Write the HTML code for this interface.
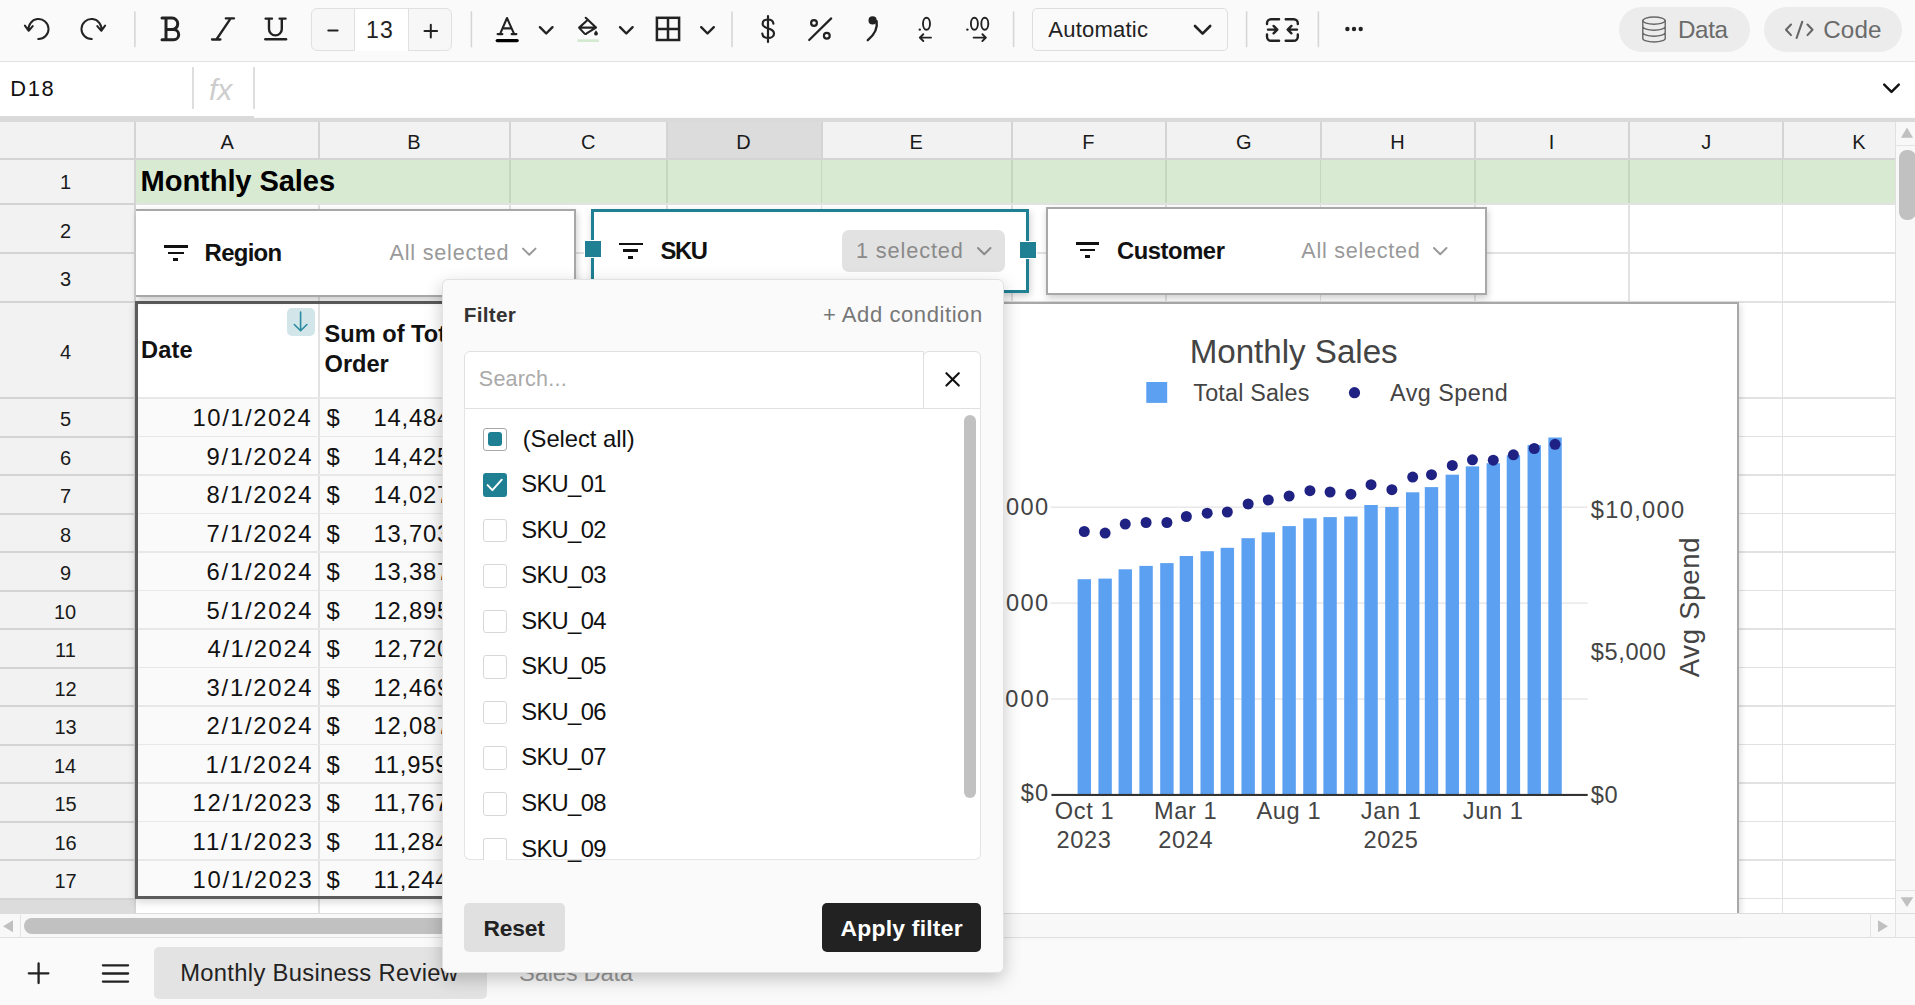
<!DOCTYPE html><html><head><meta charset="utf-8"><style>html,body{margin:0;padding:0;width:1915px;height:1005px;overflow:hidden;background:#fafafa}</style></head><body><div style="position:relative;width:1915px;height:1005px;overflow:hidden"><div style="position:absolute;left:0px;top:0px;width:1915px;height:1005px;background:#fafafa"></div><div style="position:absolute;left:0px;top:122px;width:1895px;height:791px;background:#fff"></div><div style="position:absolute;left:0px;top:122px;width:1895px;height:37.19999999999999px;background:#f2f2f2"></div><div style="position:absolute;left:666.9px;top:122px;width:154.60000000000002px;height:37.19999999999999px;background:#dcdcdc"></div><div style="position:absolute;left:0px;top:122px;width:135.1px;height:791px;background:#f2f2f2"></div><div style="position:absolute;left:0px;top:898.5px;width:135.1px;height:14.5px;background:#dcdcdc"></div><div style="position:absolute;left:135.1px;top:159.2px;width:1759.9px;height:44.80000000000001px;background:#d9ead3"></div><div style="position:absolute;left:317.8px;top:159.2px;width:1.8px;height:753.8px;background:#e2e2e2"></div><div style="position:absolute;left:509.0px;top:159.2px;width:1.8px;height:753.8px;background:#e2e2e2"></div><div style="position:absolute;left:666.0px;top:159.2px;width:1.8px;height:753.8px;background:#e2e2e2"></div><div style="position:absolute;left:820.6px;top:159.2px;width:1.8px;height:753.8px;background:#e2e2e2"></div><div style="position:absolute;left:1011.4px;top:159.2px;width:1.8px;height:753.8px;background:#e2e2e2"></div><div style="position:absolute;left:1165.3999999999999px;top:159.2px;width:1.8px;height:753.8px;background:#e2e2e2"></div><div style="position:absolute;left:1319.6999999999998px;top:159.2px;width:1.8px;height:753.8px;background:#e2e2e2"></div><div style="position:absolute;left:1473.8px;top:159.2px;width:1.8px;height:753.8px;background:#e2e2e2"></div><div style="position:absolute;left:1627.8999999999999px;top:159.2px;width:1.8px;height:753.8px;background:#e2e2e2"></div><div style="position:absolute;left:1781.6999999999998px;top:159.2px;width:1.8px;height:753.8px;background:#e2e2e2"></div><div style="position:absolute;left:317.8px;top:159.2px;width:1.8px;height:44.80000000000001px;background:#d9ead3"></div><div style="position:absolute;left:509.0px;top:159.2px;width:1.8px;height:44.80000000000001px;background:#c6d7c0"></div><div style="position:absolute;left:666.0px;top:159.2px;width:1.8px;height:44.80000000000001px;background:#c6d7c0"></div><div style="position:absolute;left:820.6px;top:159.2px;width:1.8px;height:44.80000000000001px;background:#c6d7c0"></div><div style="position:absolute;left:1011.4px;top:159.2px;width:1.8px;height:44.80000000000001px;background:#c6d7c0"></div><div style="position:absolute;left:1165.3999999999999px;top:159.2px;width:1.8px;height:44.80000000000001px;background:#c6d7c0"></div><div style="position:absolute;left:1319.6999999999998px;top:159.2px;width:1.8px;height:44.80000000000001px;background:#c6d7c0"></div><div style="position:absolute;left:1473.8px;top:159.2px;width:1.8px;height:44.80000000000001px;background:#c6d7c0"></div><div style="position:absolute;left:1627.8999999999999px;top:159.2px;width:1.8px;height:44.80000000000001px;background:#c6d7c0"></div><div style="position:absolute;left:1781.6999999999998px;top:159.2px;width:1.8px;height:44.80000000000001px;background:#c6d7c0"></div><div style="position:absolute;left:135.1px;top:203.1px;width:1759.9px;height:1.8px;background:#e2e2e2"></div><div style="position:absolute;left:135.1px;top:251.79999999999998px;width:1759.9px;height:1.8px;background:#e2e2e2"></div><div style="position:absolute;left:135.1px;top:300.8px;width:1759.9px;height:1.8px;background:#e2e2e2"></div><div style="position:absolute;left:135.1px;top:397.1px;width:1759.9px;height:1.8px;background:#e2e2e2"></div><div style="position:absolute;left:135.1px;top:435.6px;width:1759.9px;height:1.8px;background:#e2e2e2"></div><div style="position:absolute;left:135.1px;top:474.1px;width:1759.9px;height:1.8px;background:#e2e2e2"></div><div style="position:absolute;left:135.1px;top:512.6px;width:1759.9px;height:1.8px;background:#e2e2e2"></div><div style="position:absolute;left:135.1px;top:551.1px;width:1759.9px;height:1.8px;background:#e2e2e2"></div><div style="position:absolute;left:135.1px;top:589.6px;width:1759.9px;height:1.8px;background:#e2e2e2"></div><div style="position:absolute;left:135.1px;top:628.1px;width:1759.9px;height:1.8px;background:#e2e2e2"></div><div style="position:absolute;left:135.1px;top:666.6px;width:1759.9px;height:1.8px;background:#e2e2e2"></div><div style="position:absolute;left:135.1px;top:705.1px;width:1759.9px;height:1.8px;background:#e2e2e2"></div><div style="position:absolute;left:135.1px;top:743.6px;width:1759.9px;height:1.8px;background:#e2e2e2"></div><div style="position:absolute;left:135.1px;top:782.1px;width:1759.9px;height:1.8px;background:#e2e2e2"></div><div style="position:absolute;left:135.1px;top:820.6px;width:1759.9px;height:1.8px;background:#e2e2e2"></div><div style="position:absolute;left:135.1px;top:859.1px;width:1759.9px;height:1.8px;background:#e2e2e2"></div><div style="position:absolute;left:135.1px;top:897.6px;width:1759.9px;height:1.8px;background:#e2e2e2"></div><div style="position:absolute;left:134.1px;top:122px;width:2px;height:37.19999999999999px;background:#d4d4d4"></div><div style="position:absolute;left:317.7px;top:122px;width:2px;height:37.19999999999999px;background:#d4d4d4"></div><div style="position:absolute;left:508.9px;top:122px;width:2px;height:37.19999999999999px;background:#d4d4d4"></div><div style="position:absolute;left:665.9px;top:122px;width:2px;height:37.19999999999999px;background:#d4d4d4"></div><div style="position:absolute;left:820.5px;top:122px;width:2px;height:37.19999999999999px;background:#d4d4d4"></div><div style="position:absolute;left:1011.3px;top:122px;width:2px;height:37.19999999999999px;background:#d4d4d4"></div><div style="position:absolute;left:1165.3px;top:122px;width:2px;height:37.19999999999999px;background:#d4d4d4"></div><div style="position:absolute;left:1319.6px;top:122px;width:2px;height:37.19999999999999px;background:#d4d4d4"></div><div style="position:absolute;left:1473.7px;top:122px;width:2px;height:37.19999999999999px;background:#d4d4d4"></div><div style="position:absolute;left:1627.8px;top:122px;width:2px;height:37.19999999999999px;background:#d4d4d4"></div><div style="position:absolute;left:1781.6px;top:122px;width:2px;height:37.19999999999999px;background:#d4d4d4"></div><div style="position:absolute;left:0px;top:158.0px;width:1895px;height:2.4px;background:#d4d4d4"></div><div style="position:absolute;left:134.1px;top:122px;width:2px;height:791px;background:#d4d4d4"></div><div style="position:absolute;left:0px;top:203.0px;width:135.1px;height:2px;background:#d4d4d4"></div><div style="position:absolute;left:0px;top:251.7px;width:135.1px;height:2px;background:#d4d4d4"></div><div style="position:absolute;left:0px;top:300.7px;width:135.1px;height:2px;background:#d4d4d4"></div><div style="position:absolute;left:0px;top:397.0px;width:135.1px;height:2px;background:#d4d4d4"></div><div style="position:absolute;left:0px;top:435.5px;width:135.1px;height:2px;background:#d4d4d4"></div><div style="position:absolute;left:0px;top:474.0px;width:135.1px;height:2px;background:#d4d4d4"></div><div style="position:absolute;left:0px;top:512.5px;width:135.1px;height:2px;background:#d4d4d4"></div><div style="position:absolute;left:0px;top:551.0px;width:135.1px;height:2px;background:#d4d4d4"></div><div style="position:absolute;left:0px;top:589.5px;width:135.1px;height:2px;background:#d4d4d4"></div><div style="position:absolute;left:0px;top:628.0px;width:135.1px;height:2px;background:#d4d4d4"></div><div style="position:absolute;left:0px;top:666.5px;width:135.1px;height:2px;background:#d4d4d4"></div><div style="position:absolute;left:0px;top:705.0px;width:135.1px;height:2px;background:#d4d4d4"></div><div style="position:absolute;left:0px;top:743.5px;width:135.1px;height:2px;background:#d4d4d4"></div><div style="position:absolute;left:0px;top:782.0px;width:135.1px;height:2px;background:#d4d4d4"></div><div style="position:absolute;left:0px;top:820.5px;width:135.1px;height:2px;background:#d4d4d4"></div><div style="position:absolute;left:0px;top:859.0px;width:135.1px;height:2px;background:#d4d4d4"></div><div style="position:absolute;left:0px;top:897.5px;width:135.1px;height:2px;background:#d4d4d4"></div><div style="position:absolute;left:220.40px;top:132.34px;font-family:'Liberation Sans', sans-serif;font-size:20px;font-weight:400;font-style:normal;line-height:1;white-space:pre;color:#1a1a1a;letter-spacing:0.000px;">A</div><div style="position:absolute;left:407.30px;top:132.34px;font-family:'Liberation Sans', sans-serif;font-size:20px;font-weight:400;font-style:normal;line-height:1;white-space:pre;color:#1a1a1a;letter-spacing:0.000px;">B</div><div style="position:absolute;left:580.90px;top:132.34px;font-family:'Liberation Sans', sans-serif;font-size:20px;font-weight:400;font-style:normal;line-height:1;white-space:pre;color:#1a1a1a;letter-spacing:0.000px;">C</div><div style="position:absolute;left:736.20px;top:132.34px;font-family:'Liberation Sans', sans-serif;font-size:20px;font-weight:400;font-style:normal;line-height:1;white-space:pre;color:#1a1a1a;letter-spacing:0.000px;">D</div><div style="position:absolute;left:909.40px;top:132.34px;font-family:'Liberation Sans', sans-serif;font-size:20px;font-weight:400;font-style:normal;line-height:1;white-space:pre;color:#1a1a1a;letter-spacing:0.000px;">E</div><div style="position:absolute;left:1082.30px;top:132.34px;font-family:'Liberation Sans', sans-serif;font-size:20px;font-weight:400;font-style:normal;line-height:1;white-space:pre;color:#1a1a1a;letter-spacing:0.000px;">F</div><div style="position:absolute;left:1235.95px;top:132.34px;font-family:'Liberation Sans', sans-serif;font-size:20px;font-weight:400;font-style:normal;line-height:1;white-space:pre;color:#1a1a1a;letter-spacing:0.000px;">G</div><div style="position:absolute;left:1390.15px;top:132.34px;font-family:'Liberation Sans', sans-serif;font-size:20px;font-weight:400;font-style:normal;line-height:1;white-space:pre;color:#1a1a1a;letter-spacing:0.000px;">H</div><div style="position:absolute;left:1548.75px;top:132.34px;font-family:'Liberation Sans', sans-serif;font-size:20px;font-weight:400;font-style:normal;line-height:1;white-space:pre;color:#1a1a1a;letter-spacing:0.000px;">I</div><div style="position:absolute;left:1701.20px;top:132.34px;font-family:'Liberation Sans', sans-serif;font-size:20px;font-weight:400;font-style:normal;line-height:1;white-space:pre;color:#1a1a1a;letter-spacing:0.000px;">J</div><div style="position:absolute;left:1852.15px;top:132.34px;font-family:'Liberation Sans', sans-serif;font-size:20px;font-weight:400;font-style:normal;line-height:1;white-space:pre;color:#1a1a1a;letter-spacing:0.000px;">K</div><div style="position:absolute;left:60.00px;top:172.24px;font-family:'Liberation Sans', sans-serif;font-size:20px;font-weight:400;font-style:normal;line-height:1;white-space:pre;color:#1a1a1a;letter-spacing:0.000px;">1</div><div style="position:absolute;left:60.00px;top:220.59px;font-family:'Liberation Sans', sans-serif;font-size:20px;font-weight:400;font-style:normal;line-height:1;white-space:pre;color:#1a1a1a;letter-spacing:0.000px;">2</div><div style="position:absolute;left:60.00px;top:269.44px;font-family:'Liberation Sans', sans-serif;font-size:20px;font-weight:400;font-style:normal;line-height:1;white-space:pre;color:#1a1a1a;letter-spacing:0.000px;">3</div><div style="position:absolute;left:60.00px;top:342.09px;font-family:'Liberation Sans', sans-serif;font-size:20px;font-weight:400;font-style:normal;line-height:1;white-space:pre;color:#1a1a1a;letter-spacing:0.000px;">4</div><div style="position:absolute;left:60.00px;top:409.49px;font-family:'Liberation Sans', sans-serif;font-size:20px;font-weight:400;font-style:normal;line-height:1;white-space:pre;color:#1a1a1a;letter-spacing:0.000px;">5</div><div style="position:absolute;left:60.00px;top:447.99px;font-family:'Liberation Sans', sans-serif;font-size:20px;font-weight:400;font-style:normal;line-height:1;white-space:pre;color:#1a1a1a;letter-spacing:0.000px;">6</div><div style="position:absolute;left:60.00px;top:486.49px;font-family:'Liberation Sans', sans-serif;font-size:20px;font-weight:400;font-style:normal;line-height:1;white-space:pre;color:#1a1a1a;letter-spacing:0.000px;">7</div><div style="position:absolute;left:60.00px;top:524.99px;font-family:'Liberation Sans', sans-serif;font-size:20px;font-weight:400;font-style:normal;line-height:1;white-space:pre;color:#1a1a1a;letter-spacing:0.000px;">8</div><div style="position:absolute;left:60.00px;top:563.49px;font-family:'Liberation Sans', sans-serif;font-size:20px;font-weight:400;font-style:normal;line-height:1;white-space:pre;color:#1a1a1a;letter-spacing:0.000px;">9</div><div style="position:absolute;left:54.00px;top:601.99px;font-family:'Liberation Sans', sans-serif;font-size:20px;font-weight:400;font-style:normal;line-height:1;white-space:pre;color:#1a1a1a;letter-spacing:0.000px;">10</div><div style="position:absolute;left:55.00px;top:640.49px;font-family:'Liberation Sans', sans-serif;font-size:20px;font-weight:400;font-style:normal;line-height:1;white-space:pre;color:#1a1a1a;letter-spacing:0.000px;">11</div><div style="position:absolute;left:54.50px;top:678.99px;font-family:'Liberation Sans', sans-serif;font-size:20px;font-weight:400;font-style:normal;line-height:1;white-space:pre;color:#1a1a1a;letter-spacing:0.000px;">12</div><div style="position:absolute;left:54.50px;top:717.49px;font-family:'Liberation Sans', sans-serif;font-size:20px;font-weight:400;font-style:normal;line-height:1;white-space:pre;color:#1a1a1a;letter-spacing:0.000px;">13</div><div style="position:absolute;left:54.00px;top:755.99px;font-family:'Liberation Sans', sans-serif;font-size:20px;font-weight:400;font-style:normal;line-height:1;white-space:pre;color:#1a1a1a;letter-spacing:0.000px;">14</div><div style="position:absolute;left:54.50px;top:794.49px;font-family:'Liberation Sans', sans-serif;font-size:20px;font-weight:400;font-style:normal;line-height:1;white-space:pre;color:#1a1a1a;letter-spacing:0.000px;">15</div><div style="position:absolute;left:54.50px;top:832.99px;font-family:'Liberation Sans', sans-serif;font-size:20px;font-weight:400;font-style:normal;line-height:1;white-space:pre;color:#1a1a1a;letter-spacing:0.000px;">16</div><div style="position:absolute;left:54.50px;top:871.49px;font-family:'Liberation Sans', sans-serif;font-size:20px;font-weight:400;font-style:normal;line-height:1;white-space:pre;color:#1a1a1a;letter-spacing:0.000px;">17</div><div style="position:absolute;left:140.60px;top:166.60px;font-family:'Liberation Sans', sans-serif;font-size:29.13px;font-weight:700;font-style:normal;line-height:1;white-space:pre;color:#000;letter-spacing:-0.108px;">Monthly Sales</div><div style="position:absolute;left:135.0px;top:301.0px;width:385.0px;height:597.8px;background:#fafafa;box-shadow:0 3px 8px rgba(0,0,0,0.16)"></div><div style="position:absolute;left:135.0px;top:301.0px;width:385.0px;height:97.0px;background:#fff"></div><div style="position:absolute;left:317.7px;top:301.0px;width:2px;height:597.8px;background:#e2e2e2"></div><div style="position:absolute;left:135.0px;top:397.2px;width:385.0px;height:1.6px;background:#e8e8e8"></div><div style="position:absolute;left:135.0px;top:435.7px;width:385.0px;height:1.6px;background:#e8e8e8"></div><div style="position:absolute;left:135.0px;top:474.2px;width:385.0px;height:1.6px;background:#e8e8e8"></div><div style="position:absolute;left:135.0px;top:512.7px;width:385.0px;height:1.6px;background:#e8e8e8"></div><div style="position:absolute;left:135.0px;top:551.2px;width:385.0px;height:1.6px;background:#e8e8e8"></div><div style="position:absolute;left:135.0px;top:589.7px;width:385.0px;height:1.6px;background:#e8e8e8"></div><div style="position:absolute;left:135.0px;top:628.2px;width:385.0px;height:1.6px;background:#e8e8e8"></div><div style="position:absolute;left:135.0px;top:666.7px;width:385.0px;height:1.6px;background:#e8e8e8"></div><div style="position:absolute;left:135.0px;top:705.2px;width:385.0px;height:1.6px;background:#e8e8e8"></div><div style="position:absolute;left:135.0px;top:743.7px;width:385.0px;height:1.6px;background:#e8e8e8"></div><div style="position:absolute;left:135.0px;top:782.2px;width:385.0px;height:1.6px;background:#e8e8e8"></div><div style="position:absolute;left:135.0px;top:820.7px;width:385.0px;height:1.6px;background:#e8e8e8"></div><div style="position:absolute;left:135.0px;top:859.2px;width:385.0px;height:1.6px;background:#e8e8e8"></div><div style="position:absolute;left:135.0px;top:301.0px;width:385.0px;height:597.8px;box-sizing:border-box;border:3px solid #5c5c5c"></div><div style="position:absolute;left:286.8px;top:308px;width:28px;height:28px;background:#d2e6ea;border-radius:5px"></div><svg style="position:absolute;left:0;top:0" width="1915" height="1005"><path d="M300.6 312V330.8M294.3 324.5l6.3 6.3 6.3-6.3" fill="none" stroke="#2a8ba0" stroke-width="1.6" stroke-linecap="round" stroke-linejoin="round"/></svg><div style="position:absolute;left:141.10px;top:338.57px;font-family:'Liberation Sans', sans-serif;font-size:23.62px;font-weight:700;font-style:normal;line-height:1;white-space:pre;color:#111;letter-spacing:0.100px;">Date</div><div style="position:absolute;left:324.60px;top:323.09px;font-family:'Liberation Sans', sans-serif;font-size:23.6px;font-weight:700;font-style:normal;line-height:1;white-space:pre;color:#111;letter-spacing:0.000px;">Sum of Total</div><div style="position:absolute;left:324.60px;top:353.27px;font-family:'Liberation Sans', sans-serif;font-size:23.62px;font-weight:700;font-style:normal;line-height:1;white-space:pre;color:#111;letter-spacing:-0.025px;">Order</div><div style="position:absolute;left:192.60px;top:406.42px;font-family:'Liberation Sans', sans-serif;font-size:23.8px;font-weight:400;font-style:normal;line-height:1;white-space:pre;color:#111;letter-spacing:1.538px;">10/1/2024</div><div style="position:absolute;left:326.50px;top:406.42px;font-family:'Liberation Sans', sans-serif;font-size:23.8px;font-weight:400;font-style:normal;line-height:1;white-space:pre;color:#111;letter-spacing:0.000px;">$</div><div style="position:absolute;left:373.60px;top:406.42px;font-family:'Liberation Sans', sans-serif;font-size:23.8px;font-weight:400;font-style:normal;line-height:1;white-space:pre;color:#111;letter-spacing:0.750px;">14,484</div><div style="position:absolute;left:206.52px;top:444.92px;font-family:'Liberation Sans', sans-serif;font-size:23.8px;font-weight:400;font-style:normal;line-height:1;white-space:pre;color:#111;letter-spacing:1.768px;">9/1/2024</div><div style="position:absolute;left:326.50px;top:444.92px;font-family:'Liberation Sans', sans-serif;font-size:23.8px;font-weight:400;font-style:normal;line-height:1;white-space:pre;color:#111;letter-spacing:0.000px;">$</div><div style="position:absolute;left:373.60px;top:444.92px;font-family:'Liberation Sans', sans-serif;font-size:23.8px;font-weight:400;font-style:normal;line-height:1;white-space:pre;color:#111;letter-spacing:0.750px;">14,425</div><div style="position:absolute;left:206.52px;top:483.42px;font-family:'Liberation Sans', sans-serif;font-size:23.8px;font-weight:400;font-style:normal;line-height:1;white-space:pre;color:#111;letter-spacing:1.768px;">8/1/2024</div><div style="position:absolute;left:326.50px;top:483.42px;font-family:'Liberation Sans', sans-serif;font-size:23.8px;font-weight:400;font-style:normal;line-height:1;white-space:pre;color:#111;letter-spacing:0.000px;">$</div><div style="position:absolute;left:373.60px;top:483.42px;font-family:'Liberation Sans', sans-serif;font-size:23.8px;font-weight:400;font-style:normal;line-height:1;white-space:pre;color:#111;letter-spacing:0.750px;">14,027</div><div style="position:absolute;left:206.52px;top:521.92px;font-family:'Liberation Sans', sans-serif;font-size:23.8px;font-weight:400;font-style:normal;line-height:1;white-space:pre;color:#111;letter-spacing:1.768px;">7/1/2024</div><div style="position:absolute;left:326.50px;top:521.92px;font-family:'Liberation Sans', sans-serif;font-size:23.8px;font-weight:400;font-style:normal;line-height:1;white-space:pre;color:#111;letter-spacing:0.000px;">$</div><div style="position:absolute;left:373.60px;top:521.92px;font-family:'Liberation Sans', sans-serif;font-size:23.8px;font-weight:400;font-style:normal;line-height:1;white-space:pre;color:#111;letter-spacing:0.750px;">13,703</div><div style="position:absolute;left:206.52px;top:560.42px;font-family:'Liberation Sans', sans-serif;font-size:23.8px;font-weight:400;font-style:normal;line-height:1;white-space:pre;color:#111;letter-spacing:1.768px;">6/1/2024</div><div style="position:absolute;left:326.50px;top:560.42px;font-family:'Liberation Sans', sans-serif;font-size:23.8px;font-weight:400;font-style:normal;line-height:1;white-space:pre;color:#111;letter-spacing:0.000px;">$</div><div style="position:absolute;left:373.60px;top:560.42px;font-family:'Liberation Sans', sans-serif;font-size:23.8px;font-weight:400;font-style:normal;line-height:1;white-space:pre;color:#111;letter-spacing:0.750px;">13,387</div><div style="position:absolute;left:206.52px;top:598.92px;font-family:'Liberation Sans', sans-serif;font-size:23.8px;font-weight:400;font-style:normal;line-height:1;white-space:pre;color:#111;letter-spacing:1.768px;">5/1/2024</div><div style="position:absolute;left:326.50px;top:598.92px;font-family:'Liberation Sans', sans-serif;font-size:23.8px;font-weight:400;font-style:normal;line-height:1;white-space:pre;color:#111;letter-spacing:0.000px;">$</div><div style="position:absolute;left:373.60px;top:598.92px;font-family:'Liberation Sans', sans-serif;font-size:23.8px;font-weight:400;font-style:normal;line-height:1;white-space:pre;color:#111;letter-spacing:0.750px;">12,895</div><div style="position:absolute;left:207.52px;top:637.42px;font-family:'Liberation Sans', sans-serif;font-size:23.8px;font-weight:400;font-style:normal;line-height:1;white-space:pre;color:#111;letter-spacing:1.625px;">4/1/2024</div><div style="position:absolute;left:326.50px;top:637.42px;font-family:'Liberation Sans', sans-serif;font-size:23.8px;font-weight:400;font-style:normal;line-height:1;white-space:pre;color:#111;letter-spacing:0.000px;">$</div><div style="position:absolute;left:373.60px;top:637.42px;font-family:'Liberation Sans', sans-serif;font-size:23.8px;font-weight:400;font-style:normal;line-height:1;white-space:pre;color:#111;letter-spacing:0.750px;">12,720</div><div style="position:absolute;left:206.52px;top:675.92px;font-family:'Liberation Sans', sans-serif;font-size:23.8px;font-weight:400;font-style:normal;line-height:1;white-space:pre;color:#111;letter-spacing:1.768px;">3/1/2024</div><div style="position:absolute;left:326.50px;top:675.92px;font-family:'Liberation Sans', sans-serif;font-size:23.8px;font-weight:400;font-style:normal;line-height:1;white-space:pre;color:#111;letter-spacing:0.000px;">$</div><div style="position:absolute;left:373.60px;top:675.92px;font-family:'Liberation Sans', sans-serif;font-size:23.8px;font-weight:400;font-style:normal;line-height:1;white-space:pre;color:#111;letter-spacing:0.750px;">12,469</div><div style="position:absolute;left:206.52px;top:714.42px;font-family:'Liberation Sans', sans-serif;font-size:23.8px;font-weight:400;font-style:normal;line-height:1;white-space:pre;color:#111;letter-spacing:1.768px;">2/1/2024</div><div style="position:absolute;left:326.50px;top:714.42px;font-family:'Liberation Sans', sans-serif;font-size:23.8px;font-weight:400;font-style:normal;line-height:1;white-space:pre;color:#111;letter-spacing:0.000px;">$</div><div style="position:absolute;left:373.60px;top:714.42px;font-family:'Liberation Sans', sans-serif;font-size:23.8px;font-weight:400;font-style:normal;line-height:1;white-space:pre;color:#111;letter-spacing:0.750px;">12,087</div><div style="position:absolute;left:205.52px;top:752.92px;font-family:'Liberation Sans', sans-serif;font-size:23.8px;font-weight:400;font-style:normal;line-height:1;white-space:pre;color:#111;letter-spacing:1.911px;">1/1/2024</div><div style="position:absolute;left:326.50px;top:752.92px;font-family:'Liberation Sans', sans-serif;font-size:23.8px;font-weight:400;font-style:normal;line-height:1;white-space:pre;color:#111;letter-spacing:0.000px;">$</div><div style="position:absolute;left:373.60px;top:752.92px;font-family:'Liberation Sans', sans-serif;font-size:23.8px;font-weight:400;font-style:normal;line-height:1;white-space:pre;color:#111;letter-spacing:0.750px;">11,959</div><div style="position:absolute;left:192.60px;top:791.42px;font-family:'Liberation Sans', sans-serif;font-size:23.8px;font-weight:400;font-style:normal;line-height:1;white-space:pre;color:#111;letter-spacing:1.663px;">12/1/2023</div><div style="position:absolute;left:326.50px;top:791.42px;font-family:'Liberation Sans', sans-serif;font-size:23.8px;font-weight:400;font-style:normal;line-height:1;white-space:pre;color:#111;letter-spacing:0.000px;">$</div><div style="position:absolute;left:373.60px;top:791.42px;font-family:'Liberation Sans', sans-serif;font-size:23.8px;font-weight:400;font-style:normal;line-height:1;white-space:pre;color:#111;letter-spacing:0.750px;">11,767</div><div style="position:absolute;left:192.60px;top:829.92px;font-family:'Liberation Sans', sans-serif;font-size:23.8px;font-weight:400;font-style:normal;line-height:1;white-space:pre;color:#111;letter-spacing:1.913px;">11/1/2023</div><div style="position:absolute;left:326.50px;top:829.92px;font-family:'Liberation Sans', sans-serif;font-size:23.8px;font-weight:400;font-style:normal;line-height:1;white-space:pre;color:#111;letter-spacing:0.000px;">$</div><div style="position:absolute;left:373.60px;top:829.92px;font-family:'Liberation Sans', sans-serif;font-size:23.8px;font-weight:400;font-style:normal;line-height:1;white-space:pre;color:#111;letter-spacing:0.750px;">11,284</div><div style="position:absolute;left:192.60px;top:868.42px;font-family:'Liberation Sans', sans-serif;font-size:23.8px;font-weight:400;font-style:normal;line-height:1;white-space:pre;color:#111;letter-spacing:1.663px;">10/1/2023</div><div style="position:absolute;left:326.50px;top:868.42px;font-family:'Liberation Sans', sans-serif;font-size:23.8px;font-weight:400;font-style:normal;line-height:1;white-space:pre;color:#111;letter-spacing:0.000px;">$</div><div style="position:absolute;left:373.60px;top:868.42px;font-family:'Liberation Sans', sans-serif;font-size:23.8px;font-weight:400;font-style:normal;line-height:1;white-space:pre;color:#111;letter-spacing:0.750px;">11,244</div><div style="position:absolute;left:700px;top:302px;width:1039px;height:631px;background:#fff;border-top:2px solid #a8a8a8;border-right:2px solid #a8a8a8;box-sizing:border-box;box-shadow:2px 2px 6px rgba(0,0,0,0.12)"></div><svg style="position:absolute;left:0;top:0" width="1915" height="1005"><rect x="1050.7" y="506.45" width="537" height="1.5" fill="#e8e8e8"/><rect x="1050.7" y="602.35" width="537" height="1.5" fill="#e8e8e8"/><rect x="1050.7" y="698.25" width="537" height="1.5" fill="#e8e8e8"/><rect x="1077.60" y="579.2" width="13.4" height="215.80" fill="#5ca0f2"/><rect x="1098.42" y="578.6" width="13.4" height="216.40" fill="#5ca0f2"/><rect x="1118.56" y="569.3" width="13.4" height="225.70" fill="#5ca0f2"/><rect x="1139.38" y="565.9" width="13.4" height="229.10" fill="#5ca0f2"/><rect x="1160.20" y="563.1" width="13.4" height="231.90" fill="#5ca0f2"/><rect x="1179.67" y="556" width="13.4" height="239.00" fill="#5ca0f2"/><rect x="1200.49" y="551.2" width="13.4" height="243.80" fill="#5ca0f2"/><rect x="1220.64" y="547.8" width="13.4" height="247.20" fill="#5ca0f2"/><rect x="1241.46" y="538.2" width="13.4" height="256.80" fill="#5ca0f2"/><rect x="1261.60" y="532.3" width="13.4" height="262.70" fill="#5ca0f2"/><rect x="1282.42" y="526.1" width="13.4" height="268.90" fill="#5ca0f2"/><rect x="1303.24" y="518.3" width="13.4" height="276.70" fill="#5ca0f2"/><rect x="1323.38" y="517.1" width="13.4" height="277.90" fill="#5ca0f2"/><rect x="1344.20" y="516.5" width="13.4" height="278.50" fill="#5ca0f2"/><rect x="1364.35" y="505" width="13.4" height="290.00" fill="#5ca0f2"/><rect x="1385.17" y="507" width="13.4" height="288.00" fill="#5ca0f2"/><rect x="1405.98" y="492.3" width="13.4" height="302.70" fill="#5ca0f2"/><rect x="1424.79" y="487.1" width="13.4" height="307.90" fill="#5ca0f2"/><rect x="1445.60" y="474.7" width="13.4" height="320.30" fill="#5ca0f2"/><rect x="1465.75" y="466.4" width="13.4" height="328.60" fill="#5ca0f2"/><rect x="1486.57" y="463.2" width="13.4" height="331.80" fill="#5ca0f2"/><rect x="1506.71" y="455.2" width="13.4" height="339.80" fill="#5ca0f2"/><rect x="1527.53" y="445.1" width="13.4" height="349.90" fill="#5ca0f2"/><rect x="1548.35" y="437.5" width="13.4" height="357.50" fill="#5ca0f2"/><circle cx="1084.30" cy="531.5" r="5.5" fill="#1f2283"/><circle cx="1105.12" cy="533.1" r="5.5" fill="#1f2283"/><circle cx="1125.26" cy="524.1" r="5.5" fill="#1f2283"/><circle cx="1146.08" cy="522.5" r="5.5" fill="#1f2283"/><circle cx="1166.90" cy="522.5" r="5.5" fill="#1f2283"/><circle cx="1186.37" cy="516.5" r="5.5" fill="#1f2283"/><circle cx="1207.19" cy="513.2" r="5.5" fill="#1f2283"/><circle cx="1227.34" cy="512" r="5.5" fill="#1f2283"/><circle cx="1248.16" cy="504" r="5.5" fill="#1f2283"/><circle cx="1268.30" cy="500" r="5.5" fill="#1f2283"/><circle cx="1289.12" cy="496" r="5.5" fill="#1f2283"/><circle cx="1309.94" cy="490.7" r="5.5" fill="#1f2283"/><circle cx="1330.08" cy="492" r="5.5" fill="#1f2283"/><circle cx="1350.90" cy="494.2" r="5.5" fill="#1f2283"/><circle cx="1371.05" cy="484.7" r="5.5" fill="#1f2283"/><circle cx="1391.87" cy="489.7" r="5.5" fill="#1f2283"/><circle cx="1412.68" cy="477.1" r="5.5" fill="#1f2283"/><circle cx="1431.49" cy="474.7" r="5.5" fill="#1f2283"/><circle cx="1452.30" cy="465.4" r="5.5" fill="#1f2283"/><circle cx="1472.45" cy="459.8" r="5.5" fill="#1f2283"/><circle cx="1493.27" cy="460.2" r="5.5" fill="#1f2283"/><circle cx="1513.41" cy="454.8" r="5.5" fill="#1f2283"/><circle cx="1534.23" cy="448.5" r="5.5" fill="#1f2283"/><circle cx="1555.05" cy="444.3" r="5.5" fill="#1f2283"/><rect x="1051.4" y="793.9" width="536.3" height="2.1" fill="#333"/><rect x="1146.3" y="382" width="20.9" height="20.9" fill="#5ca0f2"/><circle cx="1354.5" cy="392.7" r="5.6" fill="#1f2283"/></svg><div style="position:absolute;left:1189.70px;top:335.45px;font-family:'Liberation Sans', sans-serif;font-size:33.19px;font-weight:400;font-style:normal;line-height:1;white-space:pre;color:#444;letter-spacing:-0.033px;">Monthly Sales</div><div style="position:absolute;left:1193.30px;top:382.12px;font-family:'Liberation Sans', sans-serif;font-size:23.33px;font-weight:400;font-style:normal;line-height:1;white-space:pre;color:#444;letter-spacing:0.190px;">Total Sales</div><div style="position:absolute;left:1390.00px;top:382.12px;font-family:'Liberation Sans', sans-serif;font-size:23.33px;font-weight:400;font-style:normal;line-height:1;white-space:pre;color:#444;letter-spacing:0.500px;">Avg Spend</div><div style="position:absolute;left:1590.80px;top:499.27px;font-family:'Liberation Sans', sans-serif;font-size:23.62px;font-weight:400;font-style:normal;line-height:1;white-space:pre;color:#444;letter-spacing:1.333px;">$10,000</div><div style="position:absolute;left:1590.80px;top:641.39px;font-family:'Liberation Sans', sans-serif;font-size:23.6px;font-weight:400;font-style:normal;line-height:1;white-space:pre;color:#444;letter-spacing:0.600px;">$5,000</div><div style="position:absolute;left:1590.80px;top:783.59px;font-family:'Liberation Sans', sans-serif;font-size:23.6px;font-weight:400;font-style:normal;line-height:1;white-space:pre;color:#444;letter-spacing:0.600px;">$0</div><div style="position:absolute;left:954.80px;top:495.89px;font-family:'Liberation Sans', sans-serif;font-size:23.6px;font-weight:400;font-style:normal;line-height:1;white-space:pre;color:#444;letter-spacing:1.333px;">$15,000</div><div style="position:absolute;left:954.80px;top:591.89px;font-family:'Liberation Sans', sans-serif;font-size:23.6px;font-weight:400;font-style:normal;line-height:1;white-space:pre;color:#444;letter-spacing:1.333px;">$10,000</div><div style="position:absolute;left:966.00px;top:687.89px;font-family:'Liberation Sans', sans-serif;font-size:23.6px;font-weight:400;font-style:normal;line-height:1;white-space:pre;color:#444;letter-spacing:2.160px;">$5,000</div><div style="position:absolute;left:1020.70px;top:782.37px;font-family:'Liberation Sans', sans-serif;font-size:23.62px;font-weight:400;font-style:normal;line-height:1;white-space:pre;color:#444;letter-spacing:1.200px;">$0</div><div style="position:absolute;left:1054.80px;top:799.99px;font-family:'Liberation Sans', sans-serif;font-size:23.6px;font-weight:400;font-style:normal;line-height:1;white-space:pre;color:#444;letter-spacing:0.600px;">Oct 1</div><div style="position:absolute;left:1056.60px;top:828.99px;font-family:'Liberation Sans', sans-serif;font-size:23.6px;font-weight:400;font-style:normal;line-height:1;white-space:pre;color:#444;letter-spacing:0.600px;">2023</div><div style="position:absolute;left:1154.00px;top:799.99px;font-family:'Liberation Sans', sans-serif;font-size:23.6px;font-weight:400;font-style:normal;line-height:1;white-space:pre;color:#444;letter-spacing:0.600px;">Mar 1</div><div style="position:absolute;left:1158.30px;top:828.99px;font-family:'Liberation Sans', sans-serif;font-size:23.6px;font-weight:400;font-style:normal;line-height:1;white-space:pre;color:#444;letter-spacing:0.600px;">2024</div><div style="position:absolute;left:1256.50px;top:799.99px;font-family:'Liberation Sans', sans-serif;font-size:23.6px;font-weight:400;font-style:normal;line-height:1;white-space:pre;color:#444;letter-spacing:0.600px;">Aug 1</div><div style="position:absolute;left:1360.80px;top:799.99px;font-family:'Liberation Sans', sans-serif;font-size:23.6px;font-weight:400;font-style:normal;line-height:1;white-space:pre;color:#444;letter-spacing:0.600px;">Jan 1</div><div style="position:absolute;left:1363.60px;top:828.99px;font-family:'Liberation Sans', sans-serif;font-size:23.6px;font-weight:400;font-style:normal;line-height:1;white-space:pre;color:#444;letter-spacing:0.600px;">2025</div><div style="position:absolute;left:1462.80px;top:799.99px;font-family:'Liberation Sans', sans-serif;font-size:23.6px;font-weight:400;font-style:normal;line-height:1;white-space:pre;color:#444;letter-spacing:0.600px;">Jun 1</div><div style="position:absolute;left:1590px;top:587.3px;width:200px;height:40px;transform:rotate(-90deg);text-align:center;font-family:'Liberation Sans', sans-serif;font-size:27.5px;line-height:40px;color:#444;letter-spacing:0.7px">Avg Spend</div><div style="position:absolute;left:136px;top:209.3px;width:440.3px;height:87.7px;box-sizing:border-box;background:#fff;border:2px solid #a8a8a8;border-left:none;box-shadow:1px 3px 7px rgba(0,0,0,0.2)"></div><div style="position:absolute;left:163.9px;top:244.9px;width:23.9px;height:2.7px;background:#111"></div><div style="position:absolute;left:167.8px;top:251.5px;width:15.8px;height:2.7px;background:#111"></div><div style="position:absolute;left:173.0px;top:258.0px;width:5.1px;height:2.7px;background:#111"></div><div style="position:absolute;left:204.60px;top:240.92px;font-family:'Liberation Sans', sans-serif;font-size:23.91px;font-weight:700;font-style:normal;line-height:1;white-space:pre;color:#111;letter-spacing:-0.700px;">Region</div><div style="position:absolute;left:389.60px;top:241.89px;font-family:'Liberation Sans', sans-serif;font-size:21.59px;font-weight:400;font-style:normal;line-height:1;white-space:pre;color:#999;letter-spacing:0.782px;">All selected</div><svg style="position:absolute;left:0;top:0;overflow:visible" width="1" height="1"><path d="M523 248.6L529.25 254.79999999999998L535.5 248.6" fill="none" stroke="#999" stroke-width="2" stroke-linecap="round" stroke-linejoin="round"/></svg><div style="position:absolute;left:1046px;top:207.1px;width:441px;height:87.7px;box-sizing:border-box;background:#fff;border:2px solid #a8a8a8;box-shadow:1px 3px 7px rgba(0,0,0,0.2)"></div><div style="position:absolute;left:1075.6px;top:242.1px;width:23.9px;height:2.7px;background:#111"></div><div style="position:absolute;left:1079.5px;top:248.7px;width:15.8px;height:2.7px;background:#111"></div><div style="position:absolute;left:1084.6999999999998px;top:255.2px;width:5.1px;height:2.7px;background:#111"></div><div style="position:absolute;left:1116.90px;top:238.74px;font-family:'Liberation Sans', sans-serif;font-size:23.77px;font-weight:700;font-style:normal;line-height:1;white-space:pre;color:#111;letter-spacing:-0.414px;">Customer</div><div style="position:absolute;left:1301.30px;top:240.09px;font-family:'Liberation Sans', sans-serif;font-size:21.59px;font-weight:400;font-style:normal;line-height:1;white-space:pre;color:#999;letter-spacing:0.736px;">All selected</div><svg style="position:absolute;left:0;top:0;overflow:visible" width="1" height="1"><path d="M1434 248L1440.25 254.2L1446.5 248" fill="none" stroke="#999" stroke-width="2" stroke-linecap="round" stroke-linejoin="round"/></svg><div style="position:absolute;left:591px;top:209.2px;width:437.8px;height:83.9px;box-sizing:border-box;background:#fff;border:3px solid #1f7f93;box-shadow:1px 3px 7px rgba(0,0,0,0.2)"></div><div style="position:absolute;left:842px;top:230px;width:162.8px;height:41.8px;background:#e2e2e2;border-radius:7px"></div><div style="position:absolute;left:618.8px;top:242.8px;width:23.9px;height:2.7px;background:#111"></div><div style="position:absolute;left:622.6999999999999px;top:249.4px;width:15.8px;height:2.7px;background:#111"></div><div style="position:absolute;left:627.9px;top:255.9px;width:5.1px;height:2.7px;background:#111"></div><div style="position:absolute;left:660.50px;top:238.94px;font-family:'Liberation Sans', sans-serif;font-size:23.77px;font-weight:700;font-style:normal;line-height:1;white-space:pre;color:#111;letter-spacing:-1.350px;">SKU</div><div style="position:absolute;left:855.90px;top:239.86px;font-family:'Liberation Sans', sans-serif;font-size:21.74px;font-weight:400;font-style:normal;line-height:1;white-space:pre;color:#8a8a8a;letter-spacing:0.878px;">1 selected</div><svg style="position:absolute;left:0;top:0;overflow:visible" width="1" height="1"><path d="M978 248L984.25 254.2L990.5 248" fill="none" stroke="#8a8a8a" stroke-width="2" stroke-linecap="round" stroke-linejoin="round"/></svg><div style="position:absolute;left:584.5px;top:241.3px;width:16px;height:16px;background:#1f7f93;box-shadow:0 0 0 1px #fff"></div><div style="position:absolute;left:1019.5px;top:241.5px;width:16px;height:16px;background:#1f7f93;box-shadow:0 0 0 1px #fff"></div><div style="position:absolute;left:1895px;top:122px;width:20px;height:791px;background:#f8f8f8;border-left:1px solid #e0e0e0;box-sizing:border-box"></div><div style="position:absolute;left:1895px;top:145px;width:20px;height:1.2px;background:#e4e4e4"></div><div style="position:absolute;left:1895px;top:889.5px;width:20px;height:1.2px;background:#e4e4e4"></div><div style="position:absolute;left:1899.1px;top:150px;width:16.5px;height:69.5px;background:#c1c1c1;border-radius:8px"></div><div style="position:absolute;left:0px;top:913px;width:1915px;height:25px;background:#f8f8f8;border-top:1.5px solid #dcdcdc;border-bottom:1px solid #e0e0e0;box-sizing:border-box"></div><div style="position:absolute;left:19.5px;top:913px;width:1.2px;height:25px;background:#e4e4e4"></div><div style="position:absolute;left:1870px;top:913px;width:1.2px;height:25px;background:#e4e4e4"></div><div style="position:absolute;left:1894.5px;top:913px;width:1.2px;height:25px;background:#e4e4e4"></div><div style="position:absolute;left:23.5px;top:918.3px;width:700px;height:15.7px;background:#c1c1c1;border-radius:8px"></div><svg style="position:absolute;left:0;top:0" width="1915" height="1005" fill="#c0c0c0"><path d="M1901 137.7h12l-6 -10.2z"/><path d="M1900.6 897.2h12.7l-6.35 9.7z"/><path d="M1878 920.3v11.9l10 -5.95z"/><path d="M13 920.3v11.9l-10 -5.95z"/></svg><div style="position:absolute;left:154px;top:946.5px;width:332.8px;height:52.2px;background:#e3e3e3;border-radius:5px"></div><div style="position:absolute;left:180.20px;top:960.64px;font-family:'Liberation Sans', sans-serif;font-size:23.77px;font-weight:400;font-style:normal;line-height:1;white-space:pre;color:#222;letter-spacing:0.318px;">Monthly Business Review</div><div style="position:absolute;left:519.10px;top:960.94px;font-family:'Liberation Sans', sans-serif;font-size:23.77px;font-weight:400;font-style:normal;line-height:1;white-space:pre;color:#999;letter-spacing:-0.256px;">Sales Data</div><svg style="position:absolute;left:0;top:0" width="1915" height="1005"><g fill="none" stroke="#222" stroke-width="2.3" stroke-linecap="round"><path d="M38.6 963.5V983.1M28.8 973.3H48.4"/><path d="M102.9 965.3H128.1M102.9 973.5H128.1M102.9 981.6H128.1"/></g></svg><div style="position:absolute;left:442px;top:279.3px;width:562px;height:694.2px;box-sizing:border-box;background:#fafafa;border:1px solid #e2e2e2;border-radius:6px;box-shadow:0 6px 18px rgba(0,0,0,0.22)"></div><div style="position:absolute;left:463.80px;top:304.93px;font-family:'Liberation Sans', sans-serif;font-size:20.72px;font-weight:700;font-style:normal;line-height:1;white-space:pre;color:#333;letter-spacing:0.280px;">Filter</div><div style="position:absolute;left:822.90px;top:303.72px;font-family:'Liberation Sans', sans-serif;font-size:22.03px;font-weight:400;font-style:normal;line-height:1;white-space:pre;color:#777;letter-spacing:0.579px;">+ Add condition</div><div style="position:absolute;left:464.4px;top:350.6px;width:460px;height:58.7px;box-sizing:border-box;background:#fff;border:1px solid #e0e0e0;border-radius:6px 0 0 0"></div><div style="position:absolute;left:923.3px;top:350.6px;width:58.1px;height:58.7px;box-sizing:border-box;background:#fff;border:1px solid #e0e0e0;border-radius:6px 6px 0 0"></div><svg style="position:absolute;left:0;top:0" width="1915" height="1005"><path d="M946.4 373.2L958.8 385.6M958.8 373.2L946.4 385.6" stroke="#111" stroke-width="2.1" stroke-linecap="round"/></svg><div style="position:absolute;left:478.80px;top:368.49px;font-family:'Liberation Sans', sans-serif;font-size:21.59px;font-weight:400;font-style:normal;line-height:1;white-space:pre;color:#aaa;letter-spacing:0.187px;">Search...</div><div style="position:absolute;left:464.3px;top:408.6px;width:517.1px;height:451.4px;box-sizing:border-box;background:#fff;border:1px solid #e4e4e4;border-top:none;border-radius:0 0 6px 6px;overflow:hidden"></div><div style="position:absolute;left:964.1px;top:415.2px;width:11.6px;height:383px;background:#c1c1c1;border-radius:6px"></div><div style="position:absolute;left:483.2px;top:427.55px;width:23.6px;height:23.6px;box-sizing:border-box;background:#fff;border:1.2px solid #a8a8a8;border-radius:3px"></div><div style="position:absolute;left:487.9px;top:432.35px;width:14.1px;height:14.1px;background:#1f7f93;border-radius:3px"></div><div style="position:absolute;left:522.70px;top:426.67px;font-family:'Liberation Sans', sans-serif;font-size:23.8px;font-weight:400;font-style:normal;line-height:1;white-space:pre;color:#111;letter-spacing:-0.045px;">(Select all)</div><div style="position:absolute;left:483.2px;top:473.1px;width:23.6px;height:23.6px;background:#1f7f93;border-radius:3px"></div><svg style="position:absolute;left:0;top:0" width="1915" height="1005"><path d="M487.6 485.1L492.4 490.1L501.8 479.7" fill="none" stroke="#fff" stroke-width="2" stroke-linecap="round" stroke-linejoin="round"/></svg><div style="position:absolute;left:521.20px;top:472.12px;font-family:'Liberation Sans', sans-serif;font-size:23.8px;font-weight:400;font-style:normal;line-height:1;white-space:pre;color:#111;letter-spacing:-0.680px;">SKU_01</div><div style="position:absolute;left:483.2px;top:518.6500000000001px;width:23.6px;height:23.6px;box-sizing:border-box;background:#fff;border:1.2px solid #d8d8d8;border-radius:3px"></div><div style="position:absolute;left:521.20px;top:517.67px;font-family:'Liberation Sans', sans-serif;font-size:23.8px;font-weight:400;font-style:normal;line-height:1;white-space:pre;color:#111;letter-spacing:-0.680px;">SKU_02</div><div style="position:absolute;left:483.2px;top:564.2px;width:23.6px;height:23.6px;box-sizing:border-box;background:#fff;border:1.2px solid #d8d8d8;border-radius:3px"></div><div style="position:absolute;left:521.20px;top:563.22px;font-family:'Liberation Sans', sans-serif;font-size:23.8px;font-weight:400;font-style:normal;line-height:1;white-space:pre;color:#111;letter-spacing:-0.680px;">SKU_03</div><div style="position:absolute;left:483.2px;top:609.75px;width:23.6px;height:23.6px;box-sizing:border-box;background:#fff;border:1.2px solid #d8d8d8;border-radius:3px"></div><div style="position:absolute;left:521.20px;top:608.77px;font-family:'Liberation Sans', sans-serif;font-size:23.8px;font-weight:400;font-style:normal;line-height:1;white-space:pre;color:#111;letter-spacing:-0.680px;">SKU_04</div><div style="position:absolute;left:483.2px;top:655.3000000000001px;width:23.6px;height:23.6px;box-sizing:border-box;background:#fff;border:1.2px solid #d8d8d8;border-radius:3px"></div><div style="position:absolute;left:521.20px;top:654.32px;font-family:'Liberation Sans', sans-serif;font-size:23.8px;font-weight:400;font-style:normal;line-height:1;white-space:pre;color:#111;letter-spacing:-0.680px;">SKU_05</div><div style="position:absolute;left:483.2px;top:700.85px;width:23.6px;height:23.6px;box-sizing:border-box;background:#fff;border:1.2px solid #d8d8d8;border-radius:3px"></div><div style="position:absolute;left:521.20px;top:699.87px;font-family:'Liberation Sans', sans-serif;font-size:23.8px;font-weight:400;font-style:normal;line-height:1;white-space:pre;color:#111;letter-spacing:-0.680px;">SKU_06</div><div style="position:absolute;left:483.2px;top:746.4000000000001px;width:23.6px;height:23.6px;box-sizing:border-box;background:#fff;border:1.2px solid #d8d8d8;border-radius:3px"></div><div style="position:absolute;left:521.20px;top:745.42px;font-family:'Liberation Sans', sans-serif;font-size:23.8px;font-weight:400;font-style:normal;line-height:1;white-space:pre;color:#111;letter-spacing:-0.680px;">SKU_07</div><div style="position:absolute;left:483.2px;top:791.95px;width:23.6px;height:23.6px;box-sizing:border-box;background:#fff;border:1.2px solid #d8d8d8;border-radius:3px"></div><div style="position:absolute;left:521.20px;top:790.97px;font-family:'Liberation Sans', sans-serif;font-size:23.8px;font-weight:400;font-style:normal;line-height:1;white-space:pre;color:#111;letter-spacing:-0.680px;">SKU_08</div><div style="position:absolute;left:483.2px;top:837.5px;width:23.6px;height:22.5px;box-sizing:border-box;background:#fff;border:1.2px solid #d8d8d8;border-radius:3px;border-bottom:none;border-radius:3px 3px 0 0"></div><div style="position:absolute;left:521.20px;top:836.52px;font-family:'Liberation Sans', sans-serif;font-size:23.8px;font-weight:400;font-style:normal;line-height:1;white-space:pre;color:#111;letter-spacing:-0.680px;">SKU_09</div><div style="position:absolute;left:464px;top:903.2px;width:100.8px;height:48.8px;background:#e0e0e0;border-radius:5px"></div><div style="position:absolute;left:483.40px;top:916.81px;font-family:'Liberation Sans', sans-serif;font-size:22.75px;font-weight:700;font-style:normal;line-height:1;white-space:pre;color:#222;letter-spacing:-0.125px;">Reset</div><div style="position:absolute;left:822px;top:903.2px;width:159.4px;height:48.8px;background:#222;border-radius:5px"></div><div style="position:absolute;left:840.50px;top:916.98px;font-family:'Liberation Sans', sans-serif;font-size:22.9px;font-weight:700;font-style:normal;line-height:1;white-space:pre;color:#fff;letter-spacing:0.227px;">Apply filter</div><div style="position:absolute;left:0px;top:0px;width:1915px;height:61px;background:#fafafa"></div><div style="position:absolute;left:0px;top:60.6px;width:1915px;height:1.4px;background:#e2e2e2"></div><div style="position:absolute;left:311.2px;top:7.8px;width:141.3px;height:43.6px;box-sizing:border-box;background:#f7f7f7;border:1px solid #e0e0e0;border-radius:6px"></div><div style="position:absolute;left:354.3px;top:8.6px;width:55.1px;height:42px;background:#fff;border-left:1px solid #e0e0e0;border-right:1px solid #e0e0e0;box-sizing:border-box"></div><div style="position:absolute;left:366.10px;top:18.80px;font-family:'Liberation Sans', sans-serif;font-size:23px;font-weight:400;font-style:normal;line-height:1;white-space:pre;color:#222;letter-spacing:1.200px;">13</div><div style="position:absolute;left:1032.3px;top:8.1px;width:195.4px;height:43.4px;box-sizing:border-box;background:#fafafa;border:1px solid #dedede;border-radius:5px"></div><div style="position:absolute;left:1048.30px;top:18.62px;font-family:'Liberation Sans', sans-serif;font-size:22.03px;font-weight:400;font-style:normal;line-height:1;white-space:pre;color:#222;letter-spacing:0.213px;">Automatic</div><div style="position:absolute;left:1619.2px;top:7.1px;width:130.6px;height:44.6px;background:#ececec;border-radius:23px"></div><div style="position:absolute;left:1764.2px;top:7.1px;width:137.8px;height:44.6px;background:#ececec;border-radius:23px"></div><div style="position:absolute;left:1678.00px;top:17.68px;font-family:'Liberation Sans', sans-serif;font-size:24.2px;font-weight:400;font-style:normal;line-height:1;white-space:pre;color:#6b6b6b;letter-spacing:-0.367px;">Data</div><div style="position:absolute;left:1823.20px;top:17.68px;font-family:'Liberation Sans', sans-serif;font-size:24.2px;font-weight:400;font-style:normal;line-height:1;white-space:pre;color:#6b6b6b;letter-spacing:0.167px;">Code</div><svg style="position:absolute;left:0;top:0" width="1915" height="62"><g fill="none" stroke="#222" stroke-width="2" stroke-linecap="round" stroke-linejoin="round"><path d="M38.2 39A10 10 0 1 0 28.7 30.8M24.9 25.6L28.7 30.8L32.7 26.1"/><g transform="translate(130,0) scale(-1,1)"><path d="M38.2 39A10 10 0 1 0 28.7 30.8M24.9 25.6L28.7 30.8L32.7 26.1"/></g><path d="M134.9 12V46.6" stroke="#d6d6d6" stroke-width="1.6"/><path d="M471.4 12V46.6" stroke="#d6d6d6" stroke-width="1.6"/><path d="M732 12V46.6" stroke="#d6d6d6" stroke-width="1.6"/><path d="M1013.6 12V46.6" stroke="#d6d6d6" stroke-width="1.6"/><path d="M1246.6 12V46.6" stroke="#d6d6d6" stroke-width="1.6"/><path d="M1318.4 12V46.6" stroke="#d6d6d6" stroke-width="1.6"/><g stroke-width="3"><path d="M162 18.1H172A5.75 5.75 0 0 1 172 29.6H166M166 18.1V39.8M162 39.8H173.6A5.1 5.1 0 0 0 173.6 29.6H166"/></g><g stroke-width="2.3"><path d="M225.8 18.4H234M212 39.5H220.4M230.7 18.4L216.4 39.5"/></g><g stroke-width="2.4"><path d="M265.6 18.6H272M279.6 18.6H285.6M269 18.6V29A6.4 6.4 0 0 0 281.8 29V18.6"/><path d="M265.4 39.3H286" stroke-width="2.6"/></g><path d="M328.3 30.6H337.6" stroke-width="2"/><path d="M430.8 24.8V37.4M424.5 31.1H437.1" stroke-width="2"/><g stroke-width="2.1"><path d="M500 34.1L507 18L514.2 34.1M502.6 28.4H511.6M497.6 34.1H502.4M511.6 34.1H516.4"/></g><path d="M497.2 40.6H517.2" stroke="#000" stroke-width="3.2"/><path d="M539.9 27.2L546.1999999999999 33.5L552.5 27.2" stroke-width="2.4"/><path d="M620 27.2L626.3 33.5L632.6 27.2" stroke-width="2.4"/><path d="M701.2 27.2L707.5 33.5L713.8000000000001 27.2" stroke-width="2.4"/><g stroke-width="2.1"><path d="M585.7 17.8L596 27.6H579.2L587.3 20.2M579.2 27.9L584.3 33.4Q585.4 34.6 586.6 33.4L596 27.6"/></g><path d="M596 30.2Q598.2 33 597.9 34Q597.5 35.6 596 35.6Q594.4 35.6 594.1 34Q593.9 33 596 30.2Z" fill="#222" stroke="none"/><path d="M578.6 40.7H597.8" stroke="#d3ead0" stroke-width="2.7"/><g stroke-width="2.5" stroke-linecap="butt" stroke-linejoin="miter"><rect x="656.9" y="17.8" width="22.2" height="22.2"/><path d="M668 17.8V40M656.9 28.9H679.1"/></g><g stroke-width="2.2"><path d="M773.4 23.6C773 20.8 770.8 19.5 768 19.5C764.6 19.5 762.6 21.3 762.6 23.9C762.6 29.6 774 27.2 774 33.4C774 36.1 771.6 38 768 38C764.8 38 762.6 36.4 762.3 33.6M768 16.2V42"/></g><g stroke-width="2.2"><circle cx="814" cy="23" r="2.9"/><circle cx="826.8" cy="35.8" r="2.9"/><path d="M809.2 40L831.2 18.4"/></g><circle cx="872.6" cy="20.4" r="4.1" fill="#222" stroke="none"/><path d="M876.6 21.2C877.8 28 874.4 34.6 867.8 40.2" stroke-width="2.4"/><g stroke-width="1.9"><ellipse cx="926.5" cy="23.7" rx="3.5" ry="6"/><path d="M920 37.6H931M923.3 34.2L919.8 37.6L923.3 41"/></g><circle cx="919.8" cy="29.6" r="1.2" fill="#222" stroke="none"/><g stroke-width="1.9"><ellipse cx="974.4" cy="23.7" rx="3.5" ry="6"/><ellipse cx="984.8" cy="23.7" rx="3.5" ry="6"/><path d="M973.6 37.6H985.8M982.4 34.2L985.9 37.6L982.4 41"/></g><circle cx="967.4" cy="29.6" r="1.2" fill="#222" stroke="none"/><path d="M1195 26L1202.6 33.6L1210.2 26" stroke-width="2.6"/><g stroke-width="2.4"><path d="M1279.1 19.2H1271A4 4 0 0 0 1267 23.2V24.1M1267 34.4V36.8A4 4 0 0 0 1271 40.8H1279.1M1285.7 19.2H1293.8A4 4 0 0 1 1297.8 23.2V24.1M1297.8 34.4V36.8A4 4 0 0 1 1293.8 40.8H1285.7"/><path d="M1268 29.6H1277.2M1273.6 25.9L1277.3 29.6L1273.6 33.3M1297 29.6H1287.8M1291.4 25.9L1287.7 29.6L1291.4 33.3"/></g><g fill="#222" stroke="none"><circle cx="1347.4" cy="29" r="2.2"/><circle cx="1354" cy="29" r="2.2"/><circle cx="1360.7" cy="29" r="2.2"/></g><g stroke="#666" stroke-width="1.4"><ellipse cx="1654" cy="20.6" rx="11.2" ry="3.6"/><path d="M1642.8 20.6V38.4C1642.8 40.4 1647.8 42 1654 42C1660.2 42 1665.2 40.4 1665.2 38.4V20.6M1642.8 26.6C1642.8 28.6 1647.8 30.2 1654 30.2C1660.2 30.2 1665.2 28.6 1665.2 26.6M1642.8 32.6C1642.8 34.6 1647.8 36.2 1654 36.2C1660.2 36.2 1665.2 34.6 1665.2 32.6"/></g><g stroke="#666" stroke-width="2.1"><path d="M1791 24.5L1786 29.8L1791 35.1M1807.5 24.5L1812.5 29.8L1807.5 35.1M1802.2 21.8L1796.6 38"/></g></g></svg><div style="position:absolute;left:0px;top:62px;width:1915px;height:54.5px;background:#fff"></div><div style="position:absolute;left:191.9px;top:67.2px;width:2.2px;height:41.8px;background:#dedede"></div><div style="position:absolute;left:253px;top:67.2px;width:2.2px;height:41.8px;background:#dedede"></div><div style="position:absolute;left:10.20px;top:77.85px;font-family:'Liberation Sans', sans-serif;font-size:21.88px;font-weight:400;font-style:normal;line-height:1;white-space:pre;color:#111;letter-spacing:1.650px;">D18</div><div style="position:absolute;left:209px;top:74.96000000000001px;font-family:'Liberation Sans', sans-serif;font-size:30px;line-height:1;font-style:italic;color:#cdcdcd;letter-spacing:0px">fx</div><svg style="position:absolute;left:0;top:0" width="1915" height="120"><path d="M1884.2 84.6L1891.5 91.9L1898.8 84.6" fill="none" stroke="#111" stroke-width="2.4" stroke-linecap="round" stroke-linejoin="round"/></svg><div style="position:absolute;left:0px;top:116.2px;width:254px;height:6px;background:#dadada"></div><div style="position:absolute;left:254px;top:117.8px;width:1661px;height:4.4px;background:#dadada"></div></div></body></html>
